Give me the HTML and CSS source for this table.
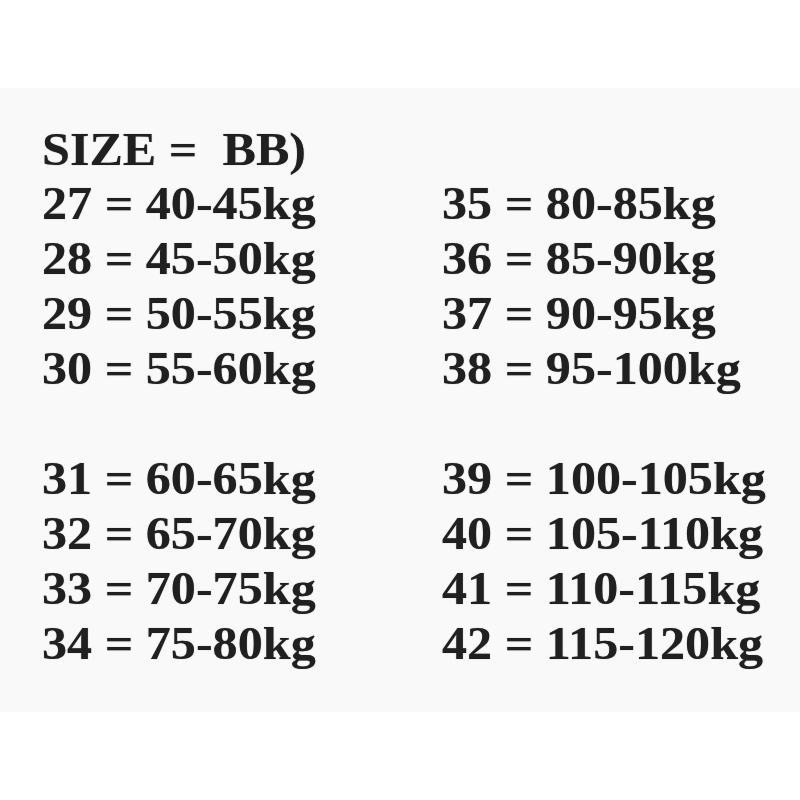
FILE: index.html
```html
<!DOCTYPE html>
<html>
<head>
<meta charset="utf-8">
<link rel="stylesheet" href="styles.css">
</head>
<body>
<div class="panel">
  <div class="chart">
    <div class="title">SIZE =  BB)</div>
    <div class="col">
      <div class="row">27 = 40-45kg</div>
      <div class="row">28 = 45-50kg</div>
      <div class="row">29 = 50-55kg</div>
      <div class="row">30 = 55-60kg</div>
      <div class="row blank">&nbsp;</div>
      <div class="row">31 = 60-65kg</div>
      <div class="row">32 = 65-70kg</div>
      <div class="row">33 = 70-75kg</div>
      <div class="row">34 = 75-80kg</div>
    </div>
    <div class="col">
      <div class="row">35 = 80-85kg</div>
      <div class="row">36 = 85-90kg</div>
      <div class="row">37 = 90-95kg</div>
      <div class="row">38 = 95-100kg</div>
      <div class="row blank">&nbsp;</div>
      <div class="row">39 = 100-105kg</div>
      <div class="row">40 = 105-110kg</div>
      <div class="row">41 = 110-115kg</div>
      <div class="row">42 = 115-120kg</div>
    </div>
  </div>
</div>
</body>
</html>
```
FILE: styles.css
```css
html, body {
  margin: 0;
  padding: 0;
  background: #ffffff;
}
body {
  width: 800px;
  height: 800px;
  overflow: hidden;
  padding-top: 88px;
  box-sizing: border-box;
}
.panel {
  background: #f9f9f9;
  height: 624px;
  padding: 35px 0 0 42px;
  box-sizing: border-box;
}
.chart {
  display: grid;
  grid-template-columns: 367px 320px;
  width: 687px;
  transform: scaleX(1.09);
  transform-origin: 0 0;
  font-family: "Liberation Serif", "Times New Roman", serif;
  font-weight: bold;
  font-size: 46px;
  line-height: 55px;
  color: #202020;
  text-shadow: 0 0 1px rgba(40, 40, 40, 0.5);
}
.title {
  grid-column: 1 / 3;
  white-space: pre;
  line-height: 53px;
}
.row {
  white-space: pre;
}
```
